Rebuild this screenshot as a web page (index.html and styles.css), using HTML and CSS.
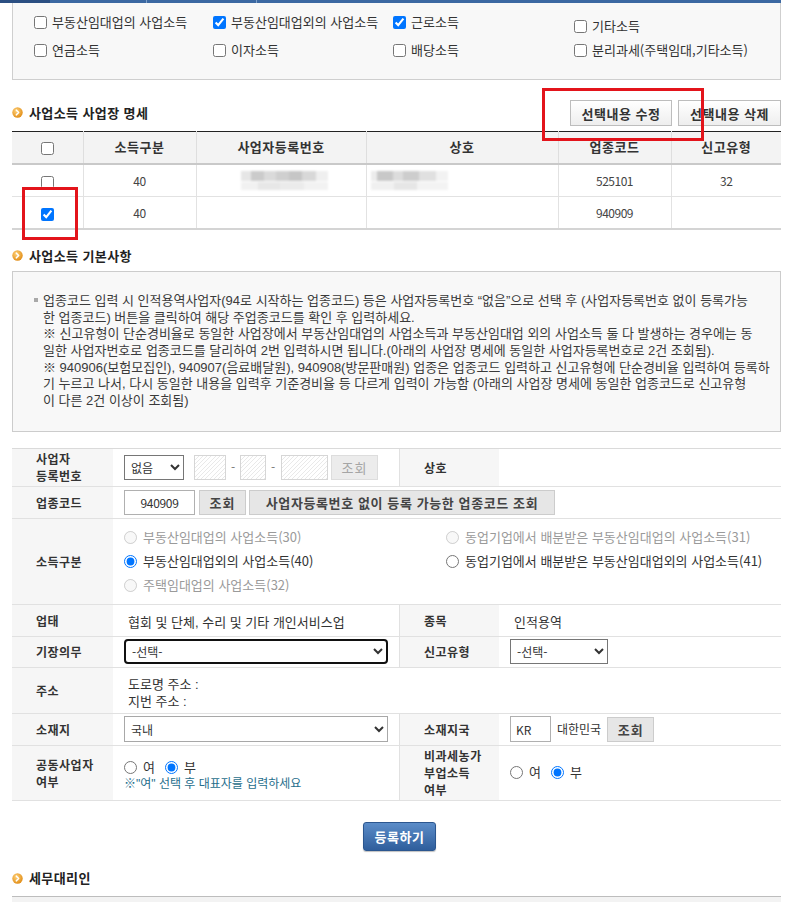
FILE: index.html
```html
<!DOCTYPE html>
<html lang="ko">
<head>
<meta charset="utf-8">
<title>사업소득 입력</title>
<link rel="stylesheet" href="styles.css">
</head>
<body>
<div class="page">
  <div class="tabs">
    <span class="tab tab-first"></span>
    <span class="tab tab-a"></span>
    <span class="tab tab-b"></span>
    <span class="tab tab-c"></span>
  </div>

  <div class="income-box">
    <label class="chk"><input type="checkbox">부동산임대업의 사업소득</label>
    <label class="chk"><input type="checkbox" checked>부동산임대업외의 사업소득</label>
    <label class="chk"><input type="checkbox" checked>근로소득</label>
    <label class="chk chk-low"><input type="checkbox">기타소득</label>
    <label class="chk"><input type="checkbox">연금소득</label>
    <label class="chk"><input type="checkbox">이자소득</label>
    <label class="chk"><input type="checkbox">배당소득</label>
    <label class="chk"><input type="checkbox">분리과세(주택임대,기타소득)</label>
  </div>

  <div class="sec-head sec-head-1">
    <h3 class="sec-title">
      <svg class="bul" viewBox="0 0 11 11" width="11" height="11"><defs><radialGradient id="og1" cx="40%" cy="35%" r="70%"><stop offset="0" stop-color="#ffd27a"/><stop offset="1" stop-color="#e08a12"/></radialGradient></defs><circle cx="5.5" cy="5.5" r="5.2" fill="url(#og1)"/><path d="M4.4 3.2 L6.6 5.5 L4.4 7.8" fill="none" stroke="#fff" stroke-width="1.6" stroke-linecap="round" stroke-linejoin="round"/></svg>
      사업소득 사업장 명세
    </h3>
    <div class="sec-btns">
      <button class="btn-gray">선택내용 수정</button>
      <button class="btn-gray">선택내용 삭제</button>
    </div>
  </div>

  <table class="list">
    <colgroup>
      <col class="c1"><col class="c2"><col class="c3"><col class="c4"><col class="c5"><col class="c6">
    </colgroup>
    <thead>
      <tr><th><input type="checkbox"></th><th>소득구분</th><th>사업자등록번호</th><th>상호</th><th>업종코드</th><th>신고유형</th></tr>
    </thead>
    <tbody>
      <tr><td><input type="checkbox"></td><td>40</td><td><span class="mosaic mosaic-a"></span></td><td class="cell-left"><span class="mosaic mosaic-b"></span></td><td>525101</td><td>32</td></tr>
      <tr><td><input type="checkbox" checked></td><td>40</td><td></td><td></td><td>940909</td><td></td></tr>
    </tbody>
  </table>

  <div class="sec-head sec-head-2">
    <h3 class="sec-title">
      <svg class="bul" viewBox="0 0 11 11" width="11" height="11"><defs><radialGradient id="og2" cx="40%" cy="35%" r="70%"><stop offset="0" stop-color="#ffd27a"/><stop offset="1" stop-color="#e08a12"/></radialGradient></defs><circle cx="5.5" cy="5.5" r="5.2" fill="url(#og2)"/><path d="M4.4 3.2 L6.6 5.5 L4.4 7.8" fill="none" stroke="#fff" stroke-width="1.6" stroke-linecap="round" stroke-linejoin="round"/></svg>
      사업소득 기본사항
    </h3>
  </div>

  <div class="info-box">
    <p class="info"><span class="sq"></span>업종코드 입력 시 인적용역사업자(94로 시작하는 업종코드) 등은 사업자등록번호 “없음”으로 선택 후 (사업자등록번호 없이 등록가능<br>한 업종코드) 버튼을 클릭하여 해당 주업종코드를 확인 후 입력하세요.<br>※ 신고유형이 단순경비율로 동일한 사업장에서 부동산임대업의 사업소득과 부동산임대업 외의 사업소득 둘 다 발생하는 경우에는 동<br>일한 사업자번호로 업종코드를 달리하여 2번 입력하시면 됩니다.(아래의 사업장 명세에 동일한 사업자등록번호로 2건 조회됨).<br>※ 940906(보험모집인), 940907(음료배달원), 940908(방문판매원) 업종은 업종코드 입력하고 신고유형에 단순경비율 입력하여 등록하<br>기 누르고 나서, 다시 동일한 내용을 입력후 기준경비율 등 다르게 입력이 가능함 (아래의 사업장 명세에 동일한 업종코드로 신고유형<br>이 다른 2건 이상이 조회됨)</p>
  </div>

  <div class="form">
    <div class="lab">사업자<br>등록번호</div>
    <div class="val">
      <select class="sel sel-none"><option>없음</option></select>
      <input class="hatch hatch-1" disabled>
      <span class="dash">-</span>
      <input class="hatch hatch-2" disabled>
      <span class="dash">-</span>
      <input class="hatch hatch-3" disabled>
      <button class="btn-sm btn-dis" disabled>조회</button>
    </div>
    <div class="lab lab-r">상호</div>
    <div class="val"></div>

    <div class="lab">업종코드</div>
    <div class="val span3">
      <input class="inp inp-code" value="940909">
      <button class="btn-sm btn-find">조회</button>
      <button class="btn-sm btn-long">사업자등록번호 없이 등록 가능한 업종코드 조회</button>
    </div>

    <div class="lab">소득구분</div>
    <div class="val span3">
      <div class="radios">
        <label class="rad dis"><input type="radio" name="kind" disabled>부동산임대업의 사업소득(30)</label>
        <label class="rad dis"><input type="radio" name="kind" disabled>동업기업에서 배분받은 부동산임대업의 사업소득(31)</label>
        <label class="rad"><input type="radio" name="kind" checked>부동산임대업외의 사업소득(40)</label>
        <label class="rad"><input type="radio" name="kind">동업기업에서 배분받은 부동산임대업외의 사업소득(41)</label>
        <label class="rad dis"><input type="radio" name="kind" disabled>주택임대업의 사업소득(32)</label>
      </div>
    </div>

    <div class="lab">업태</div>
    <div class="val val-txt"><span class="txt">협회 및 단체, 수리 및 기타 개인서비스업</span></div>
    <div class="lab lab-r">종목</div>
    <div class="val val-txt"><span class="txt">인적용역</span></div>

    <div class="lab">기장의무</div>
    <div class="val"><select class="sel sel-wide sel-focus"><option>-선택-</option></select></div>
    <div class="lab lab-r">신고유형</div>
    <div class="val"><select class="sel sel-type"><option>-선택-</option></select></div>

    <div class="lab">주소</div>
    <div class="val span3 col"><span class="txt">도로명 주소 :</span><span class="txt">지번 주소 :</span></div>

    <div class="lab">소재지</div>
    <div class="val"><select class="sel sel-wide sel-light"><option>국내</option></select></div>
    <div class="lab lab-r">소재지국</div>
    <div class="val">
      <input class="inp inp-kr" value="KR">
      <span class="country">대한민국</span>
      <button class="btn-sm btn-find">조회</button>
    </div>

    <div class="lab">공동사업자<br>여부</div>
    <div class="val col">
      <div class="rad-line">
        <label class="rad"><input type="radio" name="joint">여</label>
        <label class="rad"><input type="radio" name="joint" checked>부</label>
      </div>
      <p class="note">※"여" 선택 후 대표자를 입력하세요</p>
    </div>
    <div class="lab lab-r">비과세농가<br>부업소득<br>여부</div>
    <div class="val">
      <div class="rad-line">
        <label class="rad"><input type="radio" name="farm">여</label>
        <label class="rad"><input type="radio" name="farm" checked>부</label>
      </div>
    </div>
  </div>

  <div class="submit-row"><button class="btn-blue">등록하기</button></div>

  <div class="sec-head sec-head-3">
    <h3 class="sec-title">
      <svg class="bul" viewBox="0 0 11 11" width="11" height="11"><defs><radialGradient id="og3" cx="40%" cy="35%" r="70%"><stop offset="0" stop-color="#ffd27a"/><stop offset="1" stop-color="#e08a12"/></radialGradient></defs><circle cx="5.5" cy="5.5" r="5.2" fill="url(#og3)"/><path d="M4.4 3.2 L6.6 5.5 L4.4 7.8" fill="none" stroke="#fff" stroke-width="1.6" stroke-linecap="round" stroke-linejoin="round"/></svg>
      세무대리인
    </h3>
  </div>
  <div class="next-table"></div>

  <div class="mark mark-btn"></div>
  <div class="mark mark-chk"></div>
</div>
</body>
</html>
```

FILE: styles.css
```css
html, body {
  margin: 0;
  padding: 0;
  overflow: hidden;
  background: #fff;
}
body {
  font-family: "Noto Sans CJK KR", "Noto Sans", "Liberation Sans", sans-serif;
  font-size: 12px;
  color: #333;
  line-height: 1.3;
}
button, input, select {
  font-family: inherit;
}
.page {
  position: relative;
  padding: 0 13px 0 12px;
  width: 769px;
}

/* tab strip */
.tabs {
  display: flex;
  height: 3px;
  margin-left: -12px;
  width: 781px;
}
.tab { height: 3px; }
.tab-first { width: 50px; background: #2b4f82; }
.tab-a { width: 96px; background: #3b68a2; border-right: 1px solid #7ea0c8; }
.tab-b { width: 109px; background: #3b68a2; border-right: 1px solid #7ea0c8; }
.tab-c { flex: 1; background: #3b68a2; }

/* income check box */
.income-box {
  display: grid;
  grid-template-columns: 179px 180px 181px auto;
  grid-auto-rows: 28px;
  padding: 5px 0 15px 21px;
  background: #f8f8f8;
  border: 1px solid #cfcfcf;
  border-top: none;
}
.chk {
  display: flex;
  align-items: center;
  gap: 5px;
  white-space: nowrap;
  color: #333;
  font-size: 13px;
}
.chk input { margin: 0; width: 13px; height: 13px; }
.chk-low { padding-top: 8px; }

/* section heads */
.sec-head {
  display: flex;
  justify-content: space-between;
  align-items: center;
}
.sec-head-1 { margin-top: 20px; height: 26px; margin-bottom: 5px; }
.sec-head-2 { margin-top: 16px; height: 20px; margin-bottom: 5px; }
.sec-head-3 { margin-top: 18px; height: 20px; margin-bottom: 7px; }
.sec-title {
  margin: 0;
  display: flex;
  align-items: center;
  gap: 6px;
  font-size: 13px;
  font-weight: bold;
  color: #222;
  letter-spacing: 0.4px;
}
.bul { display: block; flex: none; }
.sec-btns { display: flex; gap: 6px; }
.btn-gray {
  width: 102px;
  height: 26px;
  padding: 0;
  border: 1px solid #bdbdbd;
  background: linear-gradient(#ffffff, #eeeeee);
  font-size: 13px;
  font-weight: bold;
  color: #333;
  letter-spacing: 0.5px;
}
.sec-btns .btn-gray + .btn-gray { width: 103px; }

/* list table */
.list {
  width: 769px;
  border-collapse: collapse;
  table-layout: fixed;
  border-top: 1px solid #222;
}
.c1 { width: 71px; }
.c2 { width: 113px; }
.c3 { width: 170px; }
.c4 { width: 192px; }
.c5 { width: 113px; }
.c6 { width: 110px; }
.list th {
  height: 31px;
  padding: 0;
  background: #f3f3f3;
  border-bottom: 2px solid #c9c9c9;
  border-left: 1px solid #dedede;
  font-size: 13px;
  font-weight: bold;
  color: #333;
  letter-spacing: 0.5px;
}
.list td {
  height: 31px;
  padding: 0;
  text-align: center;
  border-bottom: 1px solid #e2e2e2;
  border-left: 1px solid #e2e2e2;
  font-size: 12px;
  color: #444;
  letter-spacing: -0.5px;
}
.list tbody tr:last-child td { border-bottom: 2px solid #d4d4d4; }
.list th:first-child, .list td:first-child { border-left: none; }
.list input { margin: 0; width: 13px; height: 13px; vertical-align: middle; }
.list td.cell-left { text-align: left; padding-left: 4px; }
.mosaic {
  display: inline-block;
  height: 19px;
  vertical-align: middle;
  filter: blur(1px);
}
.mosaic-a {
  width: 87px;
  margin-left: 6px;
  background:
    linear-gradient(90deg, #e6e6e6 0 12%, #cbcbcb 12% 27%, #dadada 27% 40%, #cfcfcf 40% 55%, #c6c6c6 55% 70%, #d8d8d8 70% 86%, #efefef 86%) top / 100% 55% no-repeat,
    linear-gradient(90deg, #f1f1f1 0 20%, #e7e7e7 20% 45%, #ebebeb 45% 72%, #f2f2f2 72%) bottom / 100% 45% no-repeat;
}
.mosaic-b {
  width: 77px;
  background:
    linear-gradient(90deg, #ececec 0 8%, #c8c8c8 8% 28%, #dcdcdc 28% 42%, #cdcdcd 42% 62%, #e0e0e0 62% 84%, #f2f2f2 84%) top / 100% 55% no-repeat,
    linear-gradient(90deg, #f0f0f0 0 30%, #e6e6e6 30% 60%, #f3f3f3 60%) bottom / 100% 45% no-repeat;
}

/* info box */
.info-box {
  border: 1px solid #cccccc;
  background: #f8f8f8;
  padding: 21px 10px 21px 30px;
}
.info {
  margin: 0;
  font-family: "Liberation Sans", "Noto Sans CJK KR", sans-serif;
  font-size: 13px;
  line-height: 16.67px;
  color: #3a3a3a;
  white-space: nowrap;
}
.sq {
  display: inline-block;
  width: 11px;
  margin-left: -11px;
  height: 10px;
  position: relative;
}
.sq::before {
  content: "";
  position: absolute;
  left: 2px;
  top: 3px;
  width: 4px;
  height: 4px;
  background: #a9a9a9;
}

/* form */
.form {
  margin-top: 16px;
  display: grid;
  grid-template-columns: 101px 286px 100px 282px;
  grid-template-rows: 38px 32px 86px 32px 31px 46px 32px 55px;
  border-top: 1px solid #dadada;
}
.form > div {
  box-sizing: border-box;
  border-bottom: 1px solid #e1e1e1;
}
.lab {
  background: #f6f6f6;
  display: flex;
  align-items: center;
  padding-left: 24px;
  font-size: 12px;
  font-weight: bold;
  color: #333;
  line-height: 17px;
  letter-spacing: 0.5px;
}
.lab-r { border-left: 1px solid #e1e1e1; }
.val {
  display: flex;
  align-items: center;
  padding-left: 11px;
  min-width: 0;
}
.val-txt { padding-top: 4px; }
.span3 { grid-column: span 3; }
.val.col {
  flex-direction: column;
  align-items: flex-start;
  justify-content: center;
  padding-top: 6px;
}
.txt {
  padding-left: 4px;
  font-family: "Liberation Sans", "Noto Sans CJK KR", sans-serif;
  font-size: 13px;
  color: #333;
  line-height: 17px;
}
.sel {
  height: 25px;
  font-size: 12px;
  color: #333;
  border: 1px solid #767676;
  border-radius: 0;
  background: #fff;
  padding: 0 2px;
  box-sizing: border-box;
}
.sel-none { width: 60px; margin-right: 10px; }
.sel-wide { width: 264px; }
.sel-type { width: 98px; }
.sel-focus { border: 2px solid #111; border-radius: 4px; }
.sel-light { border-color: #a8a8a8; height: 26px; }
.hatch {
  height: 25px;
  box-sizing: border-box;
  margin: 0;
  border: 1px solid #d6d6d6;
  background: repeating-linear-gradient(135deg, #ffffff 0 2.2px, #e9e9e9 2.2px 3px);
  padding: 0;
}
.hatch-1 { width: 32px; }
.hatch-2 { width: 26px; }
.hatch-3 { width: 47px; }
.dash {
  width: 14px;
  text-align: center;
  color: #777;
  font-size: 12px;
}
.dash + .hatch-3 { margin-left: 1px; }
.btn-sm {
  height: 25px;
  padding: 0;
  border: 1px solid #cccccc;
  background: #e6e6e6;
  font-size: 13px;
  font-weight: bold;
  color: #444;
  letter-spacing: 1px;
}
.btn-dis {
  width: 47px;
  margin-left: 3px;
  color: #a5a5a5;
  background: #ececec;
  border-color: #dddddd;
  font-weight: normal;
}
.btn-find { width: 47px; }
.btn-long { width: 306px; margin-left: 3px; letter-spacing: 0.6px; }
.inp {
  height: 25px;
  box-sizing: border-box;
  margin: 0;
  border: 1px solid #b0b0b0;
  font-size: 12px;
  color: #333;
  background: #fff;
}
.inp-code { width: 71px; text-align: center; margin-right: 4px; letter-spacing: -0.3px; }
.inp-kr { width: 41px; padding: 0 5px; height: 26px; }
.country { margin: 0 6px; font-size: 12px; color: #333; }

.radios {
  display: grid;
  grid-template-columns: 322px auto;
  grid-auto-rows: 24px;
}
.rad {
  display: flex;
  align-items: center;
  gap: 6px;
  white-space: nowrap;
  font-size: 13px;
  color: #333;
}
.rad input { margin: 0; width: 13px; height: 13px; }
.rad.dis { color: #9a9a9a; }
.rad-line { display: flex; gap: 10px; height: 18px; align-items: center; }
.note {
  margin: 0;
  font-family: "Liberation Sans", "Noto Sans CJK KR", sans-serif;
  font-size: 12px;
  line-height: 17px;
  color: #1f6e8c;
}

/* submit */
.submit-row {
  display: flex;
  justify-content: center;
  margin-top: 21px;
  padding-left: 6px;
}
.btn-blue {
  width: 73px;
  height: 29px;
  padding: 0;
  border: 1px solid #2b568f;
  border-radius: 3px;
  background: linear-gradient(#5b8cc8, #2f5e9c);
  color: #fff;
  font-size: 13px;
  font-weight: bold;
  letter-spacing: 0.5px;
  box-shadow: 0 1px 1px rgba(0,0,0,0.25);
}

.next-table {
  height: 8px;
  border-top: 1px solid #bdbdbd;
  background: #f3f3f3;
}

/* red annotation frames */
.mark {
  position: absolute;
  box-sizing: border-box;
  border: 3px solid #e3141b;
}
.mark-btn { left: 542px; top: 88px; width: 162px; height: 53px; }
.mark-chk { left: 22px; top: 187px; width: 56px; height: 53px; }
```
